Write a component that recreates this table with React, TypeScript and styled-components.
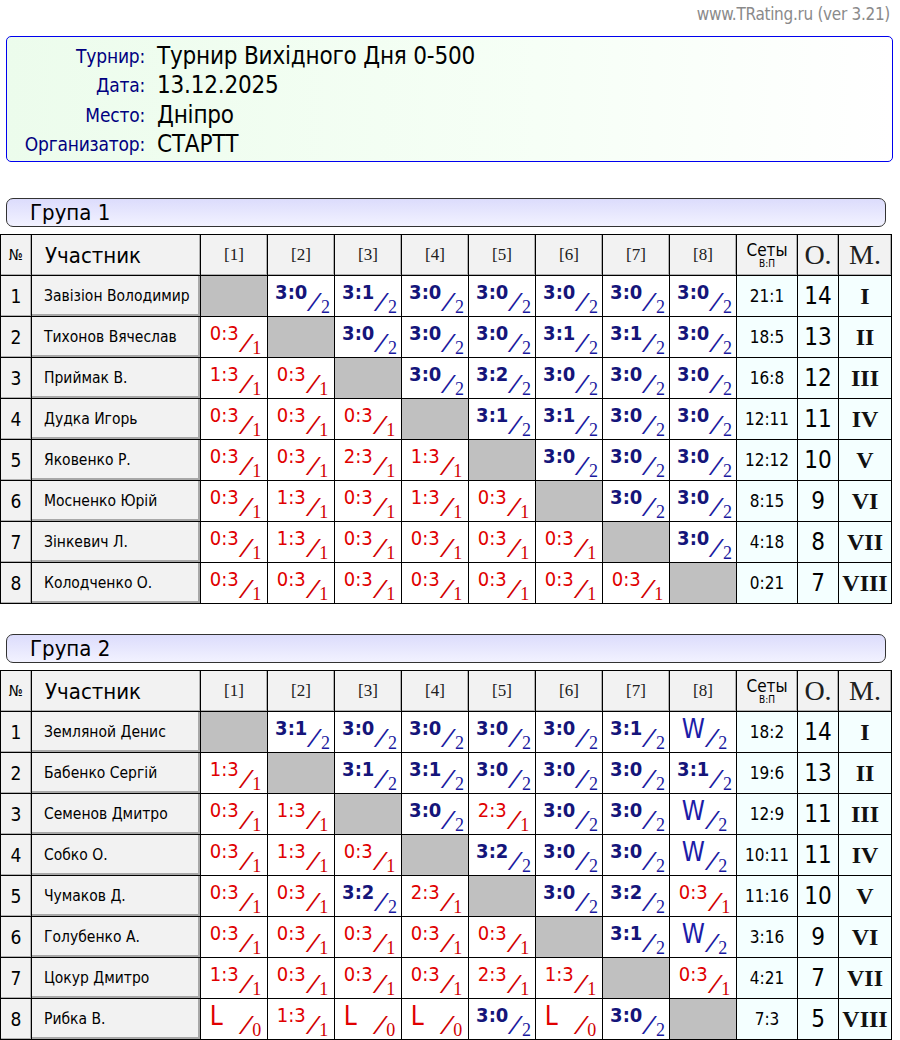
import React from "react";
import styled, { createGlobalStyle } from "styled-components";

const Global = createGlobalStyle`
  html, body { margin: 0; padding: 0; background: #fff; }
  body { font-family: Tahoma, "DejaVu Sans Condensed", "DejaVu Sans", sans-serif; color: #000; }
`;

const SANS = `Tahoma, "DejaVu Sans Condensed", "DejaVu Sans", sans-serif`;
const SERIF = `"Liberation Serif", "Times New Roman", serif`;

const Page = styled.div`
  width: 900px;
  display: flex;
  flex-direction: column;
`;

const SiteLine = styled.div`
  height: 30px;
  padding: 4px 10px 0 0;
  box-sizing: border-box;
  text-align: right;
  color: #8a8a8a;
  font-size: 17px;
  font-family: "DejaVu Sans Condensed", ${SANS};
  letter-spacing: -0.3px;
`;

const InfoBox = styled.div`
  margin: 6px 0 0 6px;
  width: 887px;
  height: 126px;
  box-sizing: border-box;
  border: 1px solid #0000ee;
  border-radius: 5px;
  background: linear-gradient(to right, #ecfcec, #f6fff6 60%, #ffffff);
  padding: 4px 0 0 0;
  display: grid;
  grid-template-columns: 138px 1fr;
  grid-auto-rows: 29.5px;
  column-gap: 12px;
  align-items: center;
`;

const InfoLabel = styled.div`
  text-align: right;
  color: #000080;
  font-size: 19px;
  letter-spacing: -0.2px;
`;

const InfoValue = styled.div`
  color: #000;
  font-size: 24px;
  letter-spacing: -0.2px;
`;

const GroupBar = styled.div<{ $top: number }>`
  margin: ${(p) => p.$top}px 0 0 6px;
  width: 880px;
  height: 29px;
  box-sizing: border-box;
  border: 1px solid #333;
  border-radius: 7px;
  background: linear-gradient(to bottom, #dcdcfc, #f2f2ff);
  padding-left: 23px;
  font-size: 22px;
  line-height: 27px;
  color: #000;
`;

const Table = styled.table`
  margin-top: 7px;
  border-collapse: collapse;
  table-layout: fixed;
  width: 891px;
  border: 1px solid #000;
`;

const Th = styled.th<{ $kind?: "num" | "name" | "col" | "sets" | "big" }>`
  border: 1px solid #000;
  background: #f2f2f2;
  height: 40px;
  padding: 0;
  font-weight: normal;
  box-shadow: inset -1px -1px 0 #b0b0b0;
  text-align: ${(p) => (p.$kind === "name" ? "left" : "center")};
  padding-left: ${(p) => (p.$kind === "name" ? "13px" : "0")};
  font-family: ${(p) => (p.$kind === "col" || p.$kind === "big" ? SERIF : SANS)};
  font-size: ${(p) =>
    p.$kind === "num" ? "15px" : p.$kind === "name" ? "22px" : p.$kind === "col" ? "17px" : p.$kind === "big" ? "28px" : "14px"};
  color: ${(p) => (p.$kind === "col" || p.$kind === "big" ? "#202020" : "#000")};
`;

const SetsHead = styled.div`
  display: flex;
  flex-direction: column;
  align-items: center;
  line-height: 16px;
  font-size: 17px;
`;

const SetsSub = styled.span`
  font-size: 10px;
  line-height: 11px;
`;

const BodyRow = styled.tr`
  height: 41px;
`;

const NumCell = styled.td`
  border: 1px solid #000;
  background: #f2f2f2;
  box-shadow: inset -1px -1px 0 #b0b0b0;
  text-align: center;
  font-size: 19px;
  height: 40px;
  padding: 0;
`;

const NameCell = styled.td`
  border: 1px solid #000;
  background: #f2f2f2;
  box-shadow: inset -2px -2px 0 #a8a8a8;
  font-size: 15.5px;
  padding: 0 0 0 12px;
  white-space: nowrap;
  overflow: hidden;
`;

const ScoreCell = styled.td<{ $self?: boolean }>`
  border: 1px solid #000;
  background: ${(p) => (p.$self ? "#c0c0c0" : "#fff")};
  text-align: center;
  vertical-align: top;
  padding: 5px 0 0 3px;
  height: 35px;
  line-height: 1;
  white-space: nowrap;
`;

const Frac = styled.div`
  display: inline-flex;
  align-items: flex-start;
  height: 30px;
  overflow: visible;
`;

const Score = styled.span<{ $win: boolean; $letter?: boolean }>`
  font-family: ${SANS};
  font-size: ${(p) => (p.$letter ? "26px" : "20px")};
  line-height: 1;
  font-weight: ${(p) => (p.$win && !p.$letter ? "bold" : "normal")};
  color: ${(p) => (p.$win ? (p.$letter ? "#1c1ca8" : "#15157a") : "#e00000")};
  margin-top: ${(p) => (p.$letter ? "-1px" : "1px")};
  margin-right: ${(p) => (p.$letter && !p.$win ? "16px" : "0")};
`;

const Slash = styled.span<{ $win: boolean }>`
  font-family: ${SERIF};
  font-size: 27px;
  line-height: 1;
  font-style: italic;
  color: ${(p) => (p.$win ? "#1a1aa0" : "#d00000")};
  margin: 8px 3px 0 3px;
  transform: scaleX(1.4);
`;

const Sub = styled.span<{ $win: boolean }>`
  font-family: ${SERIF};
  font-size: 18px;
  line-height: 1;
  color: ${(p) => (p.$win ? "#1a1aa0" : "#d00000")};
  margin-top: 17px;
`;

const SetsCell = styled.td`
  border: 1px solid #000;
  background: #f4ffff;
  text-align: center;
  font-size: 17px;
  padding: 0;
`;

const PtsCell = styled.td`
  border: 1px solid #000;
  background: #f4ffff;
  text-align: center;
  font-size: 24px;
  padding: 0;
`;

const PlaceCell = styled.td`
  border: 1px solid #000;
  background: #f4ffff;
  text-align: center;
  font-family: ${SERIF};
  font-weight: bold;
  font-size: 24px;
  color: #111;
  padding: 0;
  white-space: nowrap;
`;

type Row = { name: string; res: string[]; sets: string; pts: number; place: string };

const g1: Row[] = [
  { name: "Завізіон Володимир", res: ["X", "3:0", "3:1", "3:0", "3:0", "3:0", "3:0", "3:0"], sets: "21:1", pts: 14, place: "I" },
  { name: "Тихонов Вячеслав", res: ["0:3", "X", "3:0", "3:0", "3:0", "3:1", "3:1", "3:0"], sets: "18:5", pts: 13, place: "II" },
  { name: "Приймак В.", res: ["1:3", "0:3", "X", "3:0", "3:2", "3:0", "3:0", "3:0"], sets: "16:8", pts: 12, place: "III" },
  { name: "Дудка Игорь", res: ["0:3", "0:3", "0:3", "X", "3:1", "3:1", "3:0", "3:0"], sets: "12:11", pts: 11, place: "IV" },
  { name: "Яковенко Р.", res: ["0:3", "0:3", "2:3", "1:3", "X", "3:0", "3:0", "3:0"], sets: "12:12", pts: 10, place: "V" },
  { name: "Мосненко Юрій", res: ["0:3", "1:3", "0:3", "1:3", "0:3", "X", "3:0", "3:0"], sets: "8:15", pts: 9, place: "VI" },
  { name: "Зінкевич Л.", res: ["0:3", "1:3", "0:3", "0:3", "0:3", "0:3", "X", "3:0"], sets: "4:18", pts: 8, place: "VII" },
  { name: "Колодченко О.", res: ["0:3", "0:3", "0:3", "0:3", "0:3", "0:3", "0:3", "X"], sets: "0:21", pts: 7, place: "VIII" },
];

const g2: Row[] = [
  { name: "Земляной Денис", res: ["X", "3:1", "3:0", "3:0", "3:0", "3:0", "3:1", "W"], sets: "18:2", pts: 14, place: "I" },
  { name: "Бабенко Сергій", res: ["1:3", "X", "3:1", "3:1", "3:0", "3:0", "3:0", "3:1"], sets: "19:6", pts: 13, place: "II" },
  { name: "Семенов Дмитро", res: ["0:3", "1:3", "X", "3:0", "2:3", "3:0", "3:0", "W"], sets: "12:9", pts: 11, place: "III" },
  { name: "Собко О.", res: ["0:3", "1:3", "0:3", "X", "3:2", "3:0", "3:0", "W"], sets: "10:11", pts: 11, place: "IV" },
  { name: "Чумаков Д.", res: ["0:3", "0:3", "3:2", "2:3", "X", "3:0", "3:2", "0:3"], sets: "11:16", pts: 10, place: "V" },
  { name: "Голубенко А.", res: ["0:3", "0:3", "0:3", "0:3", "0:3", "X", "3:1", "W"], sets: "3:16", pts: 9, place: "VI" },
  { name: "Цокур Дмитро", res: ["1:3", "0:3", "0:3", "0:3", "2:3", "1:3", "X", "0:3"], sets: "4:21", pts: 7, place: "VII" },
  { name: "Рибка В.", res: ["L", "1:3", "L", "L", "3:0", "L", "3:0", "X"], sets: "7:3", pts: 5, place: "VIII" },
];

function Result({ r }: { r: string }) {
  if (r === "X") return <ScoreCell $self />;
  const letter = r === "W" || r === "L";
  let win: boolean;
  if (letter) win = r === "W";
  else {
    const [a, b] = r.split(":").map(Number);
    win = a > b;
  }
  const sub = r === "L" ? "0" : win ? "2" : "1";
  return (
    <ScoreCell>
      <Frac>
        <Score $win={win} $letter={letter}>{r}</Score>
        <Slash $win={win}>/</Slash>
        <Sub $win={win}>{sub}</Sub>
      </Frac>
    </ScoreCell>
  );
}

function GroupTable({ rows }: { rows: Row[] }) {
  return (
    <Table>
      <colgroup>
        <col style={{ width: 31 }} />
        <col style={{ width: 169 }} />
        {rows.map((_, i) => (
          <col key={i} style={{ width: 67 }} />
        ))}
        <col style={{ width: 61 }} />
        <col style={{ width: 41 }} />
        <col style={{ width: 53 }} />
      </colgroup>
      <thead>
        <tr>
          <Th $kind="num">№</Th>
          <Th $kind="name">Участник</Th>
          {rows.map((_, i) => (
            <Th key={i} $kind="col">[{i + 1}]</Th>
          ))}
          <Th $kind="sets">
            <SetsHead>
              Сеты
              <SetsSub>В:П</SetsSub>
            </SetsHead>
          </Th>
          <Th $kind="big">O.</Th>
          <Th $kind="big">M.</Th>
        </tr>
      </thead>
      <tbody>
        {rows.map((row, i) => (
          <BodyRow key={i}>
            <NumCell>{i + 1}</NumCell>
            <NameCell>{row.name}</NameCell>
            {row.res.map((r, j) => (
              <Result key={j} r={r} />
            ))}
            <SetsCell>{row.sets}</SetsCell>
            <PtsCell>{row.pts}</PtsCell>
            <PlaceCell>{row.place}</PlaceCell>
          </BodyRow>
        ))}
      </tbody>
    </Table>
  );
}

export default function App() {
  return (
    <Page>
      <Global />
      <SiteLine>www.TRating.ru (ver 3.21)</SiteLine>
      <InfoBox>
        <InfoLabel>Турнир:</InfoLabel>
        <InfoValue>Турнир Вихідного Дня 0-500</InfoValue>
        <InfoLabel>Дата:</InfoLabel>
        <InfoValue>13.12.2025</InfoValue>
        <InfoLabel>Место:</InfoLabel>
        <InfoValue>Дніпро</InfoValue>
        <InfoLabel>Организатор:</InfoLabel>
        <InfoValue>СТАРТТ</InfoValue>
      </InfoBox>
      <GroupBar $top={36}>Група 1</GroupBar>
      <GroupTable rows={g1} />
      <GroupBar $top={30}>Група 2</GroupBar>
      <GroupTable rows={g2} />
    </Page>
  );
}
